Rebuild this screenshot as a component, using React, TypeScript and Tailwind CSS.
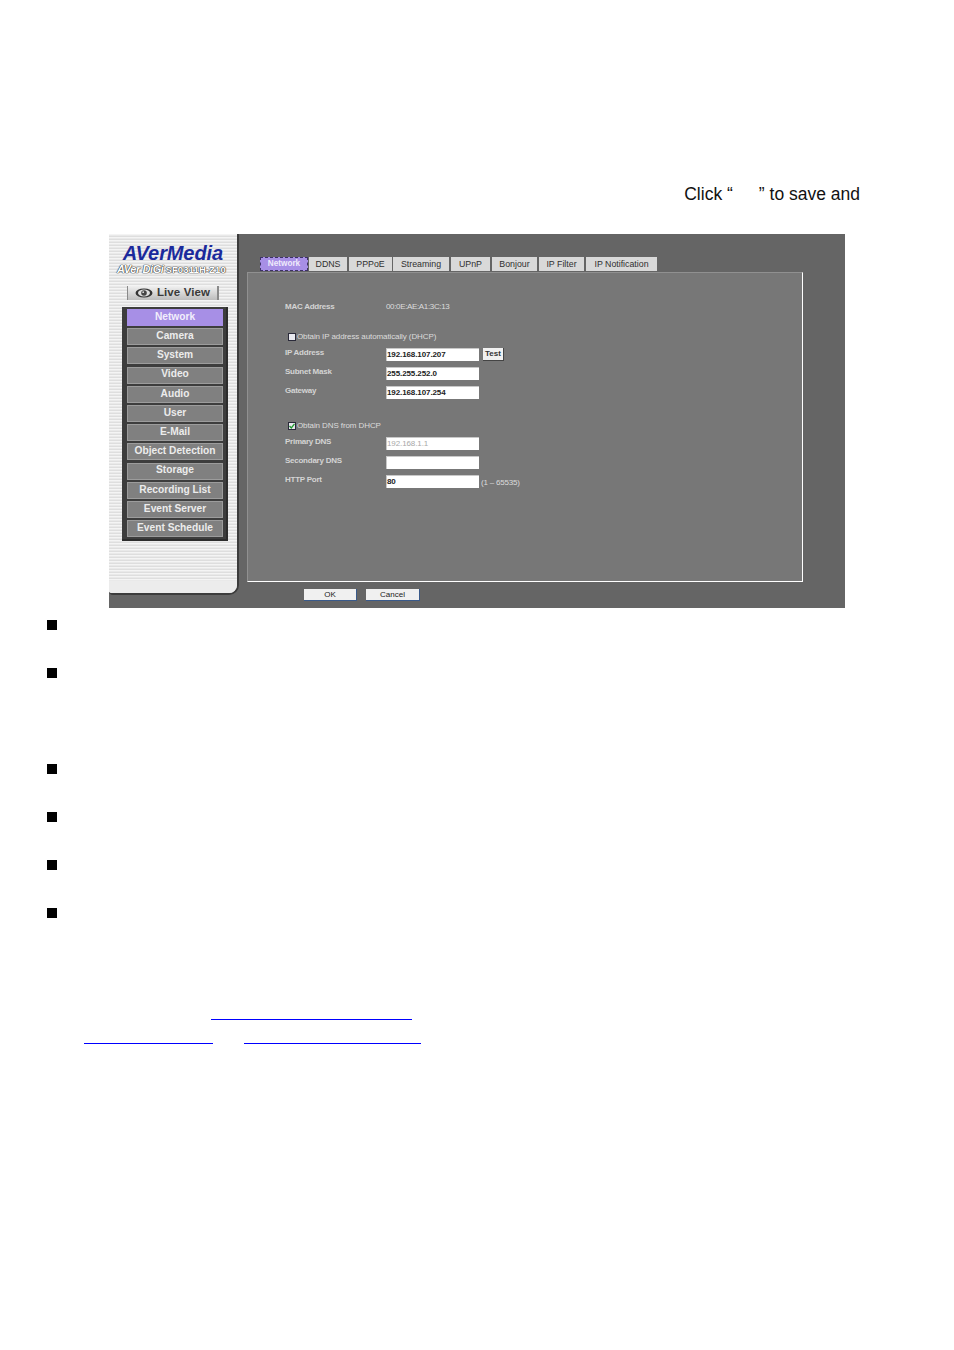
import React from 'react';

const MENU = [
  'Network', 'Camera', 'System', 'Video', 'Audio', 'User', 'E-Mail',
  'Object Detection', 'Storage', 'Recording List', 'Event Server', 'Event Schedule',
];

const TABS = [
  { label: 'DDNS', cls: 'w-[38px] mr-[2px]' },
  { label: 'PPPoE', cls: 'w-[43px] mr-[1px]' },
  { label: 'Streaming', cls: 'w-[56px] mr-[2px]' },
  { label: 'UPnP', cls: 'w-[39px] mr-[2px]' },
  { label: 'Bonjour', cls: 'w-[45px] mr-[2px]' },
  { label: 'IP Filter', cls: 'w-[45px] mr-[2px]' },
  { label: 'IP Notification', cls: 'w-[71px]' },
];

function Bullet({ className }: { className: string }) {
  return <div className={`w-[10px] h-[10px] bg-black ${className}`} />;
}

function Field({ label, value, muted, className, children }: {
  label: string;
  value: string;
  muted?: boolean;
  className: string;
  children?: React.ReactNode;
}) {
  return (
    <div className={`flex items-start h-[13px] ${className}`}>
      <div className="w-[101px] leading-[9px] text-[#d4d4d4] font-bold tracking-[-0.25px]">{label}</div>
      <div className={`w-[93px] h-[13px] bg-white border-t border-l border-[#c8c8c8] leading-[12px] tracking-[-0.1px] ${muted ? 'text-[#a8a8a8]' : 'text-[#222] font-bold'}`}>
        {value}
      </div>
      {children}
    </div>
  );
}

function Check({ label, checked, className }: { label: string; checked?: boolean; className: string }) {
  return (
    <div className={`flex items-center h-[13px] pb-[1px] pl-[3px] ${className}`}>
      <div className="w-[8px] h-[8px] mr-[1px] bg-[#e8e8ee] border border-[#2a2a3a] flex items-center justify-center">
        {checked && (
          <svg width="6" height="6" viewBox="0 0 6 6">
            <path d="M0.5 3 L2.3 5 L5.5 0.8" fill="none" stroke="#1f9a2f" strokeWidth="1.3" />
          </svg>
        )}
      </div>
      <span className="text-[#dcdcdc] tracking-[-0.1px]">{label}</span>
    </div>
  );
}

function Sidebar() {
  return (
    <div className="w-[130px] h-[361px] shrink-0 flex flex-col rounded-br-[10px] rounded-bl-[4px] overflow-hidden border-b-2 border-r-2 border-[#3c3c3c] bg-[repeating-linear-gradient(180deg,#f4f4f4_0px,#f4f4f4_1px,#dedede_2px,#dedede_3px)]">
      <div className="w-full text-right pr-[14px] pt-[9px] text-[#1b2a9c] text-[20px] leading-[20px] font-bold italic tracking-[-0.1px]">
        AVerMedia
      </div>
      <div className="w-full pl-[8px] flex items-baseline whitespace-nowrap leading-[12px] text-white font-bold [text-shadow:0_0_1px_#333,0_0_1px_#333,0_0_1px_#333]">
        <span className="text-[11px] italic tracking-[-0.4px]">AVer DiGi</span>
        <span className="ml-[2px] text-[9.5px] tracking-[0.1px]">SF0311H-Z10</span>
      </div>
      <div className="mt-[10px] ml-[18px] w-[92px] h-[14px] flex items-center justify-center gap-[4px] border-l border-r-2 border-[#8a8a8a] bg-[linear-gradient(180deg,#f0f0f0,#bdbdbd)]">
        <svg width="18" height="10" viewBox="0 0 18 10">
          <ellipse cx="9" cy="5" rx="8.5" ry="4.5" fill="#333" />
          <ellipse cx="9" cy="5" rx="6" ry="3.4" fill="#ddd" />
          <circle cx="9" cy="5" r="2.8" fill="#444" />
          <circle cx="8.2" cy="4.2" r="0.9" fill="#ddd" />
        </svg>
        <span className="text-[11.5px] font-bold text-[#3a3a3a] tracking-[0.1px]">Live View</span>
      </div>
      <div className="mt-[7px] ml-[13px] w-[106px] h-[234px] bg-[#3d3d3d] border-r-2 border-b-2 border-[#2d2d2d] pt-[2px] pl-[5px] flex flex-col gap-[2.2px]">
        {MENU.map((m, i) => (
          <div
            key={m}
            className={`w-[96px] h-[17px] shrink-0 border border-[#9c9c9c] pb-[2px] flex items-center justify-center text-[10.2px] font-bold ${i === 0 ? 'bg-[#a78fe6] border-[#a78fe6] text-[#f2eefc]' : 'bg-[#808080] text-[#ececec]'}`}
          >
            {m}
          </div>
        ))}
      </div>
      <div className="mt-auto w-full h-[12px] bg-[#ececec]" />
    </div>
  );
}

function NetworkPanel() {
  return (
    <div className="ml-[8px] mt-[1px] w-[556px] h-[310px] bg-[#777777] border-t border-l border-[#909090] border-r-white border-b-white border-r border-b pl-[37px] pt-[27px] text-[8px]">
      <div className="flex items-center h-[13px]">
        <div className="w-[101px] text-[#d4d4d4] font-bold tracking-[-0.25px]">MAC Address</div>
        <div className="text-[#dcdcdc] tracking-[-0.35px]">00:0E:AE:A1:3C:13</div>
      </div>
      <Check label="Obtain IP address automatically (DHCP)" className="mt-[18px]" />
      <Field label="IP Address" value="192.168.107.207" className="mt-[4px]">
        <div className="ml-[4px] w-[21px] h-[13px] bg-[#f1f1f1] border-r border-b border-[#444] flex items-center justify-center font-bold text-[#333]">
          Test
        </div>
      </Field>
      <Field label="Subnet Mask" value="255.255.252.0" className="mt-[6px]" />
      <Field label="Gateway" value="192.168.107.254" className="mt-[6px]" />
      <Check label="Obtain DNS from DHCP" checked className="mt-[21px]" />
      <Field label="Primary DNS" value="192.168.1.1" muted className="mt-[4px]" />
      <Field label="Secondary DNS" value="" className="mt-[6px]" />
      <Field label="HTTP Port" value="80" className="mt-[6px]">
        <div className="ml-[2px] leading-[15px] text-[#dcdcdc] tracking-[-0.2px]">(1 – 65535)</div>
      </Field>
    </div>
  );
}

function ConfigScreen() {
  return (
    <div className="ml-[109px] mt-[31px] w-[736px] h-[374px] flex bg-[#656565] font-['Liberation_Sans',Arial,sans-serif]">
      <Sidebar />
      <div className="flex-1 flex flex-col pt-[23px] min-w-0">
        <div className="ml-[21px] flex h-[14px] text-[8.8px] text-[#2f2f2f]">
          <div className="w-[48px] mr-[1px] pt-[1px] flex items-center justify-center bg-[#a78fe6] border border-dashed border-[#3d3166] font-bold text-[8.2px] text-[#efeafc]">
            Network
          </div>
          {TABS.map(t => (
            <div key={t.label} className={`${t.cls} pt-[2px] flex items-center justify-center bg-[#d9d9d9]`}>
              {t.label}
            </div>
          ))}
        </div>
        <NetworkPanel />
        <div className="ml-[65px] mt-[7px] flex gap-[9px] text-[8px] text-[#222]">
          <div className="w-[53px] h-[12px] bg-[#f0f0f0] border-b border-r border-[#3a5a8a] flex items-center justify-center">OK</div>
          <div className="w-[54px] h-[12px] bg-[#f0f0f0] border-b border-r border-[#3a5a8a] flex items-center justify-center">Cancel</div>
        </div>
      </div>
    </div>
  );
}

export default function App() {
  return (
    <div className="w-[954px] h-[1350px] bg-white overflow-hidden pt-[185px] font-['Liberation_Sans',Arial,sans-serif]">
      <div className="h-[18px] pr-[94px] text-right text-[17.5px] leading-[18px] text-[#111]">
        Click “<span className="inline-block w-[26px]" />” to save and
      </div>
      <ConfigScreen />
      <div className="pl-[47px] pt-[12px] flex flex-col">
        <Bullet className="" />
        <Bullet className="mt-[38px]" />
        <Bullet className="mt-[86px]" />
        <Bullet className="mt-[38px]" />
        <Bullet className="mt-[38px]" />
        <Bullet className="mt-[38px]" />
      </div>
      <div className="ml-[211px] mt-[101px] w-[201px] h-px bg-[#0000ff]" />
      <div className="ml-[84px] mt-[23px] flex">
        <div className="w-[129px] h-px bg-[#0000ff]" />
        <div className="ml-[31px] w-[177px] h-px bg-[#0000ff]" />
      </div>
    </div>
  );
}
